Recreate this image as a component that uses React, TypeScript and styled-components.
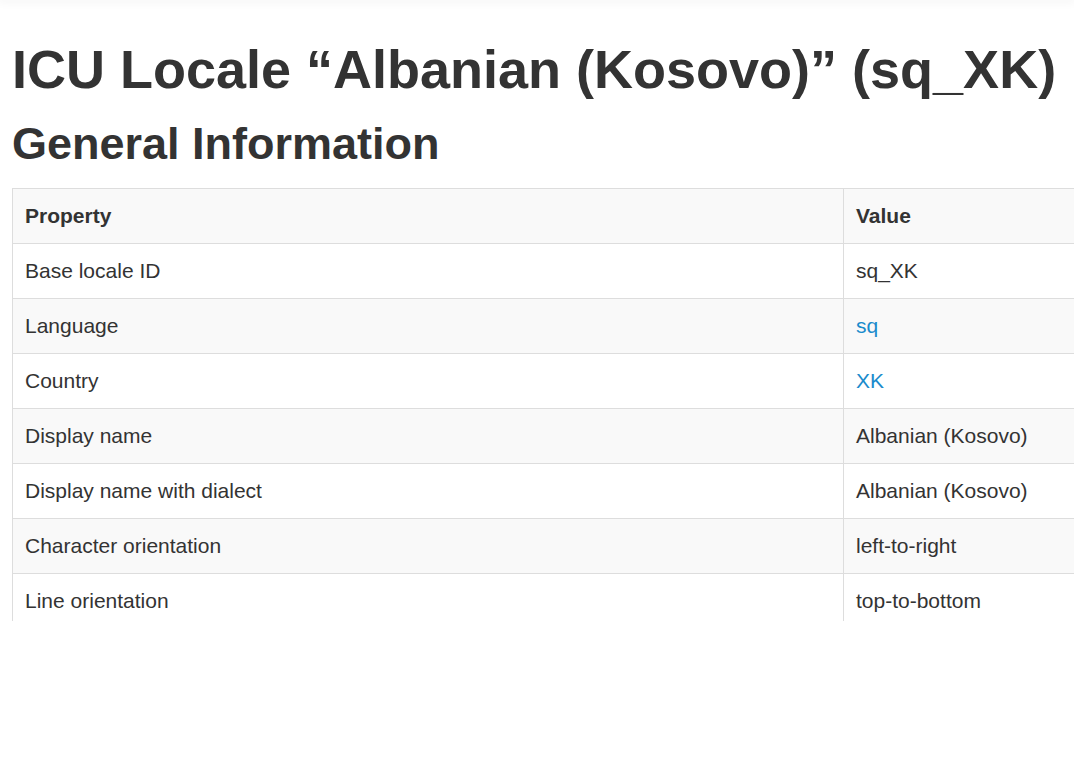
import styled, { createGlobalStyle } from 'styled-components'

const GlobalStyle = createGlobalStyle`
  html, body {
    margin: 0;
    padding: 0;
    background: #fff;
    overflow: hidden;
  }
  body {
    font-family: "Liberation Sans", Arial, Helvetica, sans-serif;
    color: #333;
  }
`

interface Row {
  property: string
  value: string
  link?: boolean
}

const rows: Row[] = [
  { property: 'Base locale ID', value: 'sq_XK' },
  { property: 'Language', value: 'sq', link: true },
  { property: 'Country', value: 'XK', link: true },
  { property: 'Display name', value: 'Albanian (Kosovo)' },
  { property: 'Display name with dialect', value: 'Albanian (Kosovo)' },
  { property: 'Character orientation', value: 'left-to-right' },
  { property: 'Line orientation', value: 'top-to-bottom' },
]

const TopBar = styled.div`
  height: 1px;
  margin-top: -1px;
  box-shadow: 0 0 10px 2px rgba(0, 0, 0, 0.06);
`

const Page = styled.main`
  padding: 39px 0 0 12px;
`

const Title = styled.h1`
  margin: 0;
  font-size: 54px;
  line-height: 60px;
  font-weight: bold;
  white-space: nowrap;
`

const SubTitle = styled.h2`
  margin: 20px 0 0;
  font-size: 45px;
  line-height: 50px;
  font-weight: bold;
`

const TableClip = styled.div`
  margin-top: 19px;
  height: 433px;
  overflow: hidden;
`

const Table = styled.table`
  width: 1100px;
  border-collapse: collapse;
  border-left: 1px solid #ddd;
  font-size: 21px;
`

const Tr = styled.tr<{ $shaded?: boolean }>`
  background: ${p => (p.$shaded ? '#f9f9f9' : '#fff')};
`

const Cell = styled.td<{ $head?: boolean; $first?: boolean }>`
  height: 55px;
  padding: 0 12px;
  box-sizing: border-box;
  border-top: 1px solid #ddd;
  border-right: 1px solid #ddd;
  font-weight: ${p => (p.$head ? 'bold' : 'normal')};
  width: ${p => (p.$first ? '831px' : 'auto')};
  vertical-align: middle;
  line-height: 26px;
`

const Link = styled.a`
  color: #1a8bcc;
  text-decoration: none;
`

export default function App() {
  return (
    <>
      <GlobalStyle />
      <TopBar />
      <Page>
        <Title>ICU Locale “Albanian (Kosovo)” (sq_XK)</Title>
        <SubTitle>General Information</SubTitle>
        <TableClip>
          <Table>
            <tbody>
              <Tr $shaded>
                <Cell $head $first>Property</Cell>
                <Cell $head>Value</Cell>
              </Tr>
              {rows.map((r, i) => (
                <Tr key={r.property} $shaded={i % 2 === 1}>
                  <Cell $first>{r.property}</Cell>
                  <Cell>{r.link ? <Link href="#">{r.value}</Link> : r.value}</Cell>
                </Tr>
              ))}
            </tbody>
          </Table>
        </TableClip>
      </Page>
    </>
  )
}
